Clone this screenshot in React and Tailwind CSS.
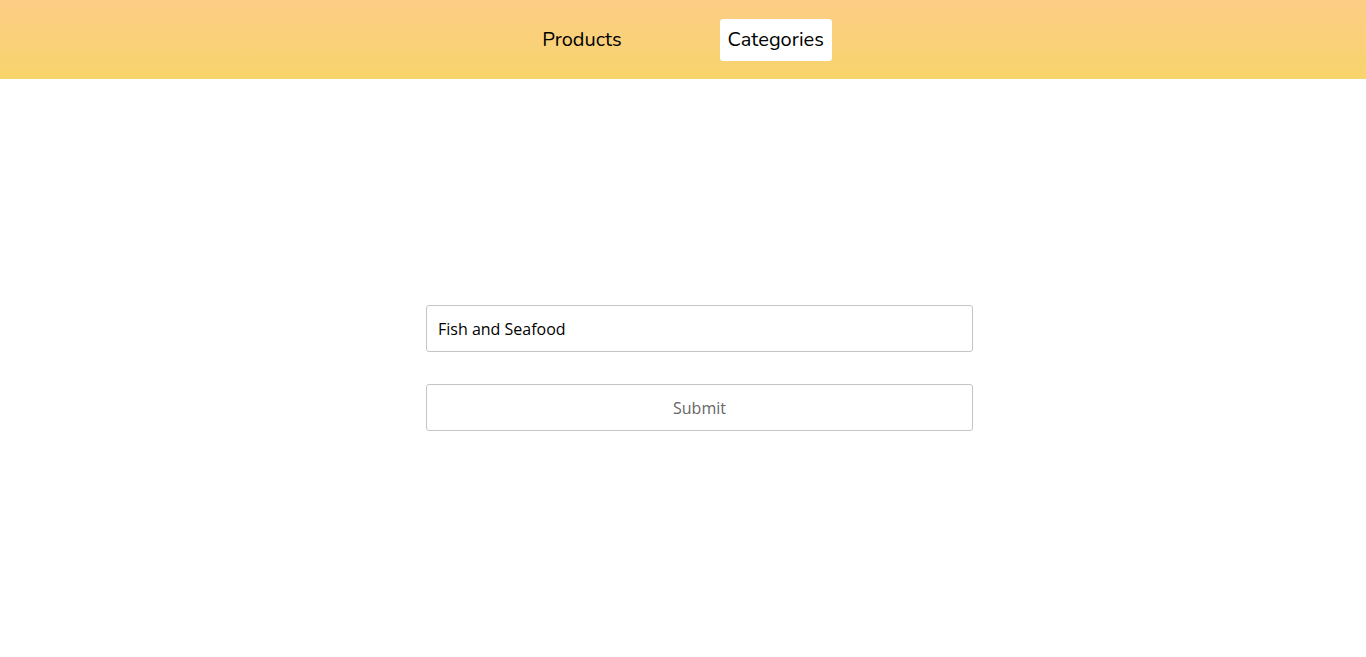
export default function App() {
  const font = { fontFamily: '"Nunito", "Lato", "Noto Sans", sans-serif' };
  const inputFont = { fontFamily: '"Open Sans", "Noto Sans", sans-serif' };
  return (
    <div className="min-h-[657px] bg-white" style={font}>
      <header className="h-[79px] bg-gradient-to-b from-[#fdcd86] to-[#f7d46b] flex items-center justify-center gap-[90px]">
        <a className="px-2 h-[42px] flex items-center text-[20px] text-black cursor-pointer">Products</a>
        <a className="px-2 h-[42px] flex items-center text-[20px] text-black bg-white rounded-[3px] cursor-pointer">Categories</a>
      </header>
      <main className="flex justify-center pl-[33px] pt-[226px]">
        <form className="w-[547px] flex flex-col gap-[32px]" onSubmit={(e) => e.preventDefault()}>
          <input
            defaultValue="Fish and Seafood"
            className="h-[47px] w-full border border-[#c4c4c4] rounded-[3px] px-[11px] text-[16px] text-black outline-none"
            style={inputFont}
          />
          <button
            type="submit"
            className="h-[47px] w-full border border-[#c4c4c4] rounded-[3px] bg-white text-[16px] text-[#666]"
            style={inputFont}
          >
            Submit
          </button>
        </form>
      </main>
    </div>
  );
}
